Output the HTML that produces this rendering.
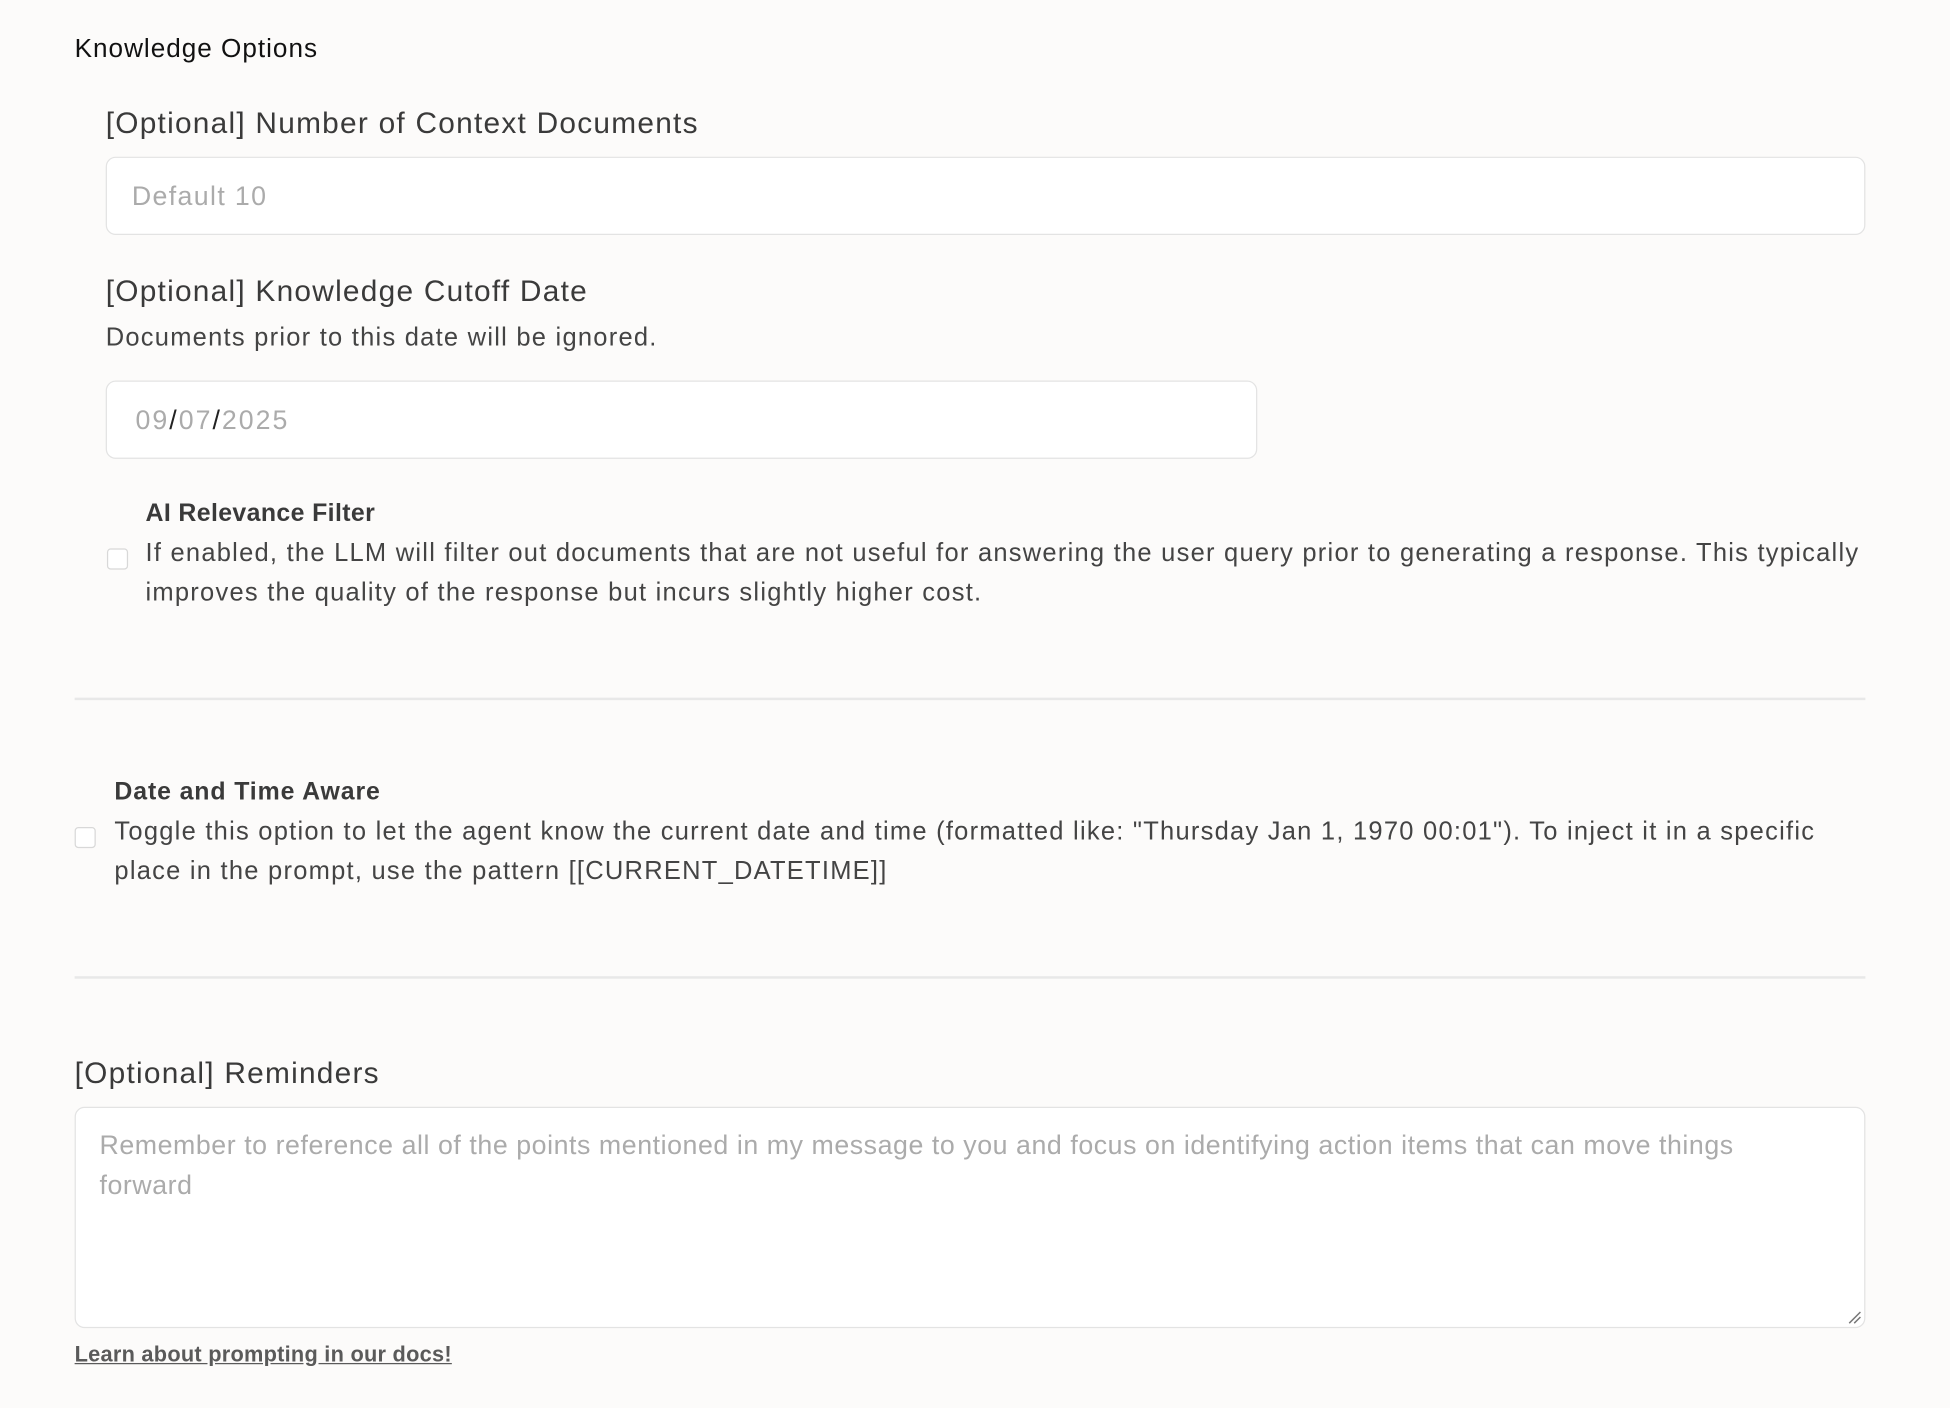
<!DOCTYPE html>
<html><head><meta charset="utf-8"><style>
html,body{margin:0;padding:0;background:#fcfbfa;overflow:hidden;width:1950px;height:1408px}
#w{position:absolute;left:0;top:0;width:1568px;height:1132px;transform:scale(1.2436);transform-origin:0 0;font-family:"Liberation Sans",sans-serif;color:#3f3f3f}
.a{position:absolute;white-space:nowrap;line-height:1}
.h{font-size:24px;color:#3a3a3a;letter-spacing:1px}
.box{position:absolute;background:#fff;border:1.5px solid #e3e3e3;border-radius:8px;box-sizing:border-box}
.ph{color:#ababab;font-size:21.5px;letter-spacing:1.1px}
.t{font-size:20.5px;color:#444;letter-spacing:1px}
.cb{position:absolute;width:17px;height:17px;border:1.5px solid #d8d8d8;border-radius:3px;background:#fff;box-sizing:border-box}
.hr{position:absolute;left:60px;width:1440px;height:2px;background:#e8e8e8}
</style></head><body><div id="w">
<div class="a" style="left:60px;top:29px;font-size:21px;letter-spacing:0.8px;color:#111">Knowledge Options</div>
<div class="a h" style="left:85px;top:88px">[Optional] Number of Context Documents</div>
<div class="box" style="left:85px;top:126px;width:1415px;height:63px"></div>
<div class="a ph" style="left:106px;top:148px">Default 10</div>
<div class="a h" style="left:85px;top:223px">[Optional] Knowledge Cutoff Date</div>
<div class="a t" style="left:85px;top:262px">Documents prior to this date will be ignored.</div>
<div class="box" style="left:85px;top:306px;width:926px;height:63px"></div>
<div class="a ph" style="left:109px;top:328px;letter-spacing:1.6px">09<span style="color:#222">/</span>07<span style="color:#222">/</span>2025</div>
<div class="a" style="left:117px;top:403px;font-size:20px;letter-spacing:0.3px;font-weight:bold;color:#3a3a3a">AI Relevance Filter</div>
<div class="cb" style="left:86px;top:441px"></div>
<div class="a t" style="left:117px;top:435px">If enabled, the LLM will filter out documents that are not useful for answering the user query prior to generating a response. This typically</div>
<div class="a t" style="left:117px;top:467px">improves the quality of the response but incurs slightly higher cost.</div>
<div class="hr" style="top:561px"></div>
<div class="a" style="left:92px;top:627px;font-size:20px;letter-spacing:0.7px;font-weight:bold;color:#3a3a3a">Date and Time Aware</div>
<div class="cb" style="left:60px;top:665px"></div>
<div class="a t" style="left:92px;top:659px">Toggle this option to let the agent know the current date and time (formatted like: "Thursday Jan 1, 1970 00:01"). To inject it in a specific</div>
<div class="a t" style="left:92px;top:691px">place in the prompt, use the pattern [[CURRENT_DATETIME]]</div>
<div class="hr" style="top:785px"></div>
<div class="a h" style="left:60px;top:852px">[Optional] Reminders</div>
<div class="box" style="left:60px;top:890px;width:1440px;height:178px"></div>
<div class="a ph" style="left:80px;top:911px;letter-spacing:0.45px">Remember to reference all of the points mentioned in my message to you and focus on identifying action items that can move things</div>
<div class="a ph" style="left:80px;top:943px;letter-spacing:0.45px">forward</div>
<svg style="position:absolute;left:1485px;top:1053px" width="12" height="12"><path d="M2 11 L11 2 M6 11 L11 6" stroke="#777" stroke-width="1.2"/></svg>
<div class="a" style="left:60px;top:1081px;font-size:17.5px;letter-spacing:0.2px;font-weight:bold;color:#5a5a5a;text-decoration:underline">Learn about prompting in our docs!</div>
</div></body></html>
